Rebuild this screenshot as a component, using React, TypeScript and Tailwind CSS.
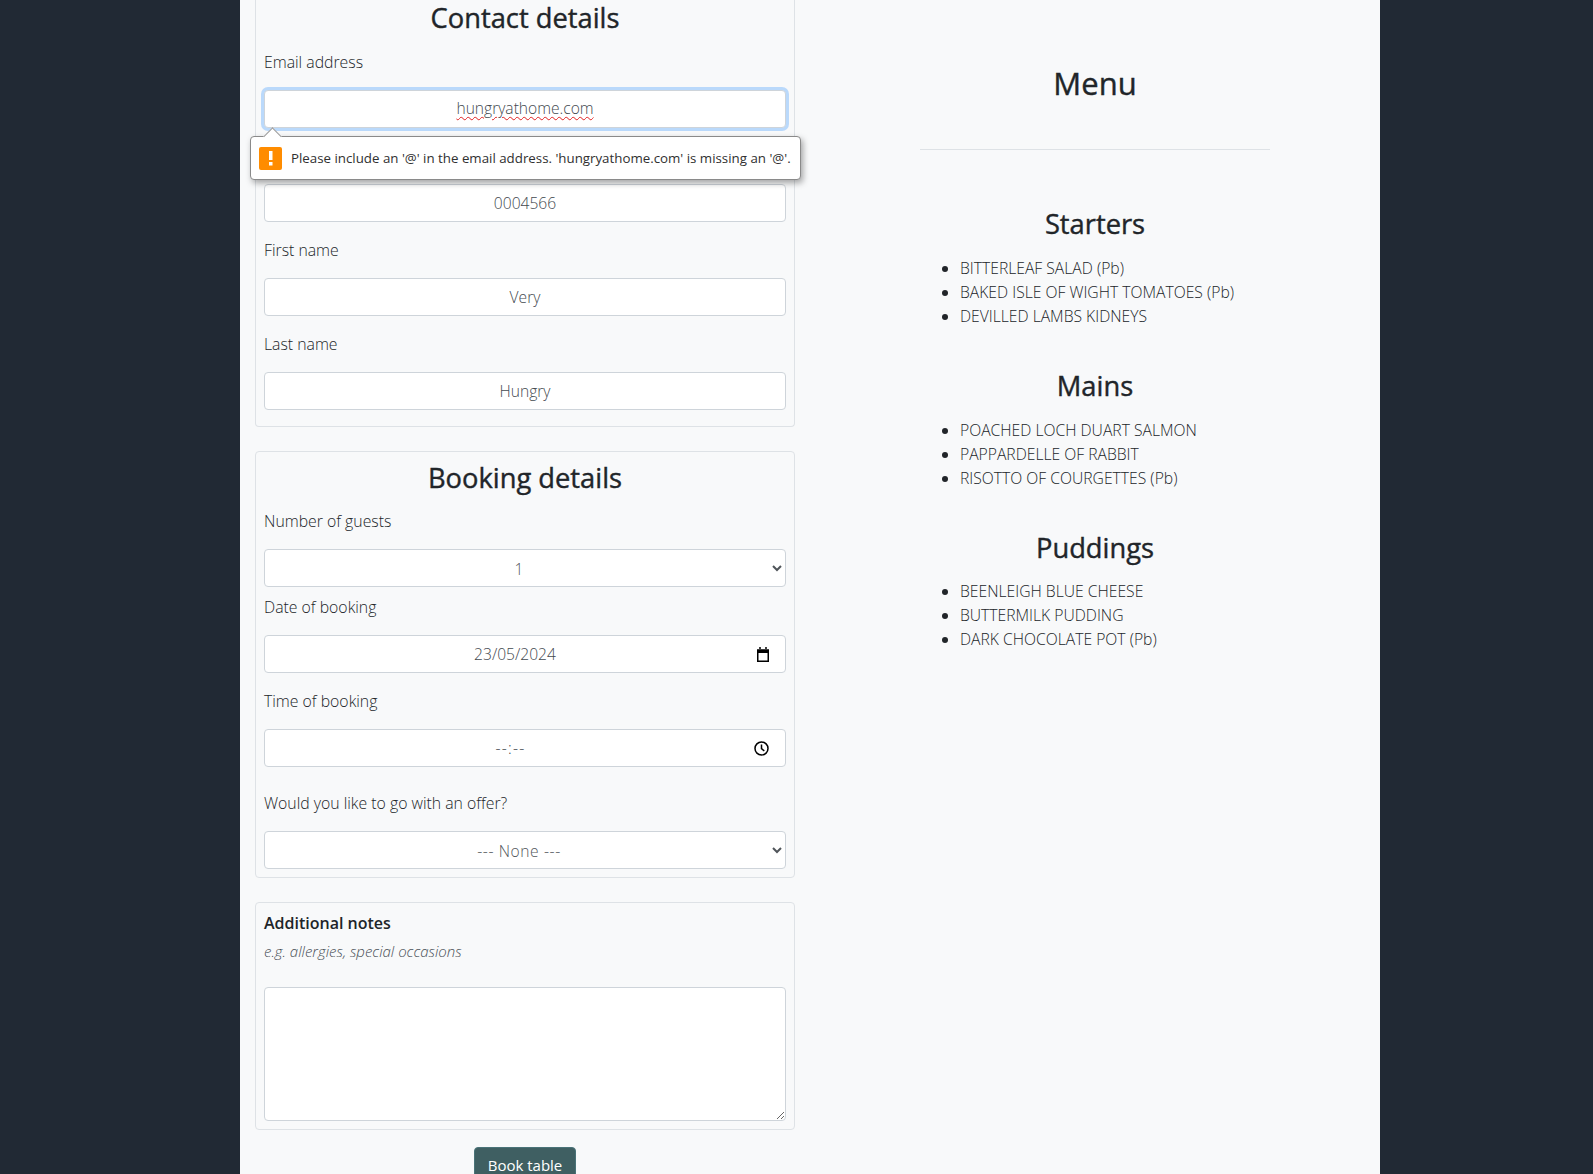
const inputBox = "h-[38px] w-full rounded-[4px] border border-[#ced4da] bg-white px-3 pt-px text-[15.6px] text-[#43494f] flex items-center";
const selectBox = "block h-[38px] w-full rounded-[4px] border border-[#ced4da] bg-white px-3 pt-[2px] text-[15.6px] text-[#50555a] text-center";
const heading = "text-center text-[27.3px] font-normal leading-[33.6px] text-[#212529] [-webkit-text-stroke:0.4px_#212529]";

function Label({ children, className = "mb-4" }: { children: React.ReactNode; className?: string }) {
  return <div className={`h-6 text-[15.8px] leading-6 text-[#212529] font-light ${className}`}>{children}</div>;
}

function TextField({ label, value }: { label: string; value: string }) {
  return (
    <div className="mb-4">
      <Label>{label}</Label>
      <input readOnly value={value} className="block h-[38px] w-full rounded-[4px] border border-[#ced4da] bg-white px-3 text-center text-[15.6px] font-light text-[#43494f]" />
    </div>
  );
}

function Section({ title, items }: { title: string; items: string[] }) {
  return (
    <section className="mb-[41px] w-[350px]">
      <h3 className={`mb-[15px] ${heading}`}>{title}</h3>
      <ul className="list-disc pl-10 text-[15.7px] font-light text-[#212529]">
        {items.map((t) => (
          <li key={t} className="h-6 leading-6">{t}</li>
        ))}
      </ul>
    </section>
  );
}

export default function App() {
  return (
    <div className="h-[1174px] overflow-hidden bg-[#212934] font-['Open_Sans','Noto_Sans',sans-serif]">
      <div className="relative ml-60 flex h-full w-[1140px] bg-[#f8f9fa] text-base">
        {/* left column */}
        <div className="w-[570px] px-[15px]">
          <fieldset className="mb-6 rounded-b-[4px] border border-t-0 border-[#dee2e6] px-2">
            <h3 className={`mb-[15px] mt-px ${heading}`}>Contact details</h3>
            <div className="mb-4">
              <Label>Email address</Label>
              <div className={`${inputBox} justify-center border-[#80bdff] font-light shadow-[0_0_0_3px_rgba(0,123,255,0.25)]`}>
                <span className="underline decoration-[#e02020] decoration-wavy decoration-1 underline-offset-2">hungryathome.com</span>
              </div>
            </div>
            <TextField label="Phone number" value="0004566" />
            <TextField label="First name" value="Very" />
            <TextField label="Last name" value="Hungry" />
          </fieldset>

          <fieldset className="mb-6 rounded-[4px] border border-[#dee2e6] px-2 pb-2 pt-[9px]">
            <h3 className={`mb-[15px] ${heading}`}>Booking details</h3>
            <Label>Number of guests</Label>
            <select className={`${selectBox} mb-2 font-light`} defaultValue="1">
              <option>1</option>
            </select>
            <Label>Date of booking</Label>
            <div className={`${inputBox} mb-4 font-light`}>
              <span className="flex-1 text-center">23/05/2024</span>
              <svg viewBox="0 0 12 15" className="ml-[4px] mr-1 h-[15px] w-3 shrink-0" fill="none" stroke="#000">
                <path d="M.75 3h10.5v11.25H.75z" strokeWidth="1.5" />
                <path d="M.75 4.5h10.5" strokeWidth="3" />
                <path d="M3 0v2M9 0v2" strokeWidth="1.5" />
              </svg>
            </div>
            <Label>Time of booking</Label>
            <div className={`${inputBox} mb-6 font-light`}>
              <span className="flex-1 pr-[10px] text-center tracking-[1.2px]">--:--</span>
              <svg viewBox="0 0 15 15" className="mr-1 h-[15px] w-[15px] shrink-0" fill="none" stroke="#000" strokeWidth="1.5">
                <circle cx="7.5" cy="7.5" r="6.5" />
                <path d="M7.5 3.5v4.2l2.8 2.2" />
              </svg>
            </div>
            <Label>Would you like to go with an offer?</Label>
            <select className={`${selectBox} font-light tracking-[0.6px]`} defaultValue="--- None ---">
              <option>--- None ---</option>
            </select>
          </fieldset>

          <fieldset className="mb-[17px] rounded-[4px] border border-[#dee2e6] p-2">
            <div className="mb-1 h-6 font-semibold leading-6 text-[#212529]">Additional notes</div>
            <div className="mb-6 h-6 text-[15px] font-light italic leading-6 text-[#495057]">e.g. allergies, special occasions</div>
            <textarea readOnly className="block h-[134px] w-full rounded-[4px] border border-[#ced4da] bg-white" />
          </fieldset>

          <div className="flex justify-center">
            <button className="h-[38px] w-[102px] rounded-[4px] border border-[#4a7378] bg-[#3f5f62] pb-[2px] text-[15px] leading-6 text-white">Book table</button>
          </div>
        </div>

        {/* right column */}
        <div className="flex w-[570px] flex-col items-center px-[15px]">
          <h2 className="mt-[64px] text-center text-[31px] font-normal leading-[38.4px] text-[#212529] [-webkit-text-stroke:0.4px_#212529]">Menu</h2>
          <hr className="mb-[57px] mt-[47px] w-[350px] border-t border-[#dee2e6]" />
          <Section title="Starters" items={["BITTERLEAF SALAD (Pb)", "BAKED ISLE OF WIGHT TOMATOES (Pb)", "DEVILLED LAMBS KIDNEYS"]} />
          <Section title="Mains" items={["POACHED LOCH DUART SALMON", "PAPPARDELLE OF RABBIT", "RISOTTO OF COURGETTES (Pb)"]} />
          <Section title="Puddings" items={["BEENLEIGH BLUE CHEESE", "BUTTERMILK PUDDING", "DARK CHOCOLATE POT (Pb)"]} />
        </div>

        {/* validation bubble */}
        <div className="absolute left-[10px] top-[136px] flex h-[44px] w-[551px] items-center rounded-[4px] border border-[#8a8a8a] bg-white pl-[8px] shadow-[2px_3px_6px_rgba(0,0,0,0.35)]">
          <div className="absolute -top-[7px] left-[15px] h-[13px] w-[13px] rotate-45 border-l border-t border-[#9a9a9a] bg-white" />
          <svg viewBox="0 0 23 23" className="relative mr-[9px] h-[23px] w-[23px] shrink-0">
            <rect width="23" height="23" rx="2" fill="#ff8c00" />
            <rect x="10" y="4" width="3.5" height="9" fill="#fff" />
            <rect x="10" y="15" width="3.5" height="3.5" fill="#fff" />
          </svg>
          <span className="relative top-px whitespace-nowrap text-[13.3px] text-[#303030]">Please include an '@' in the email address. 'hungryathome.com' is missing an '@'.</span>
        </div>
      </div>
    </div>
  );
}
